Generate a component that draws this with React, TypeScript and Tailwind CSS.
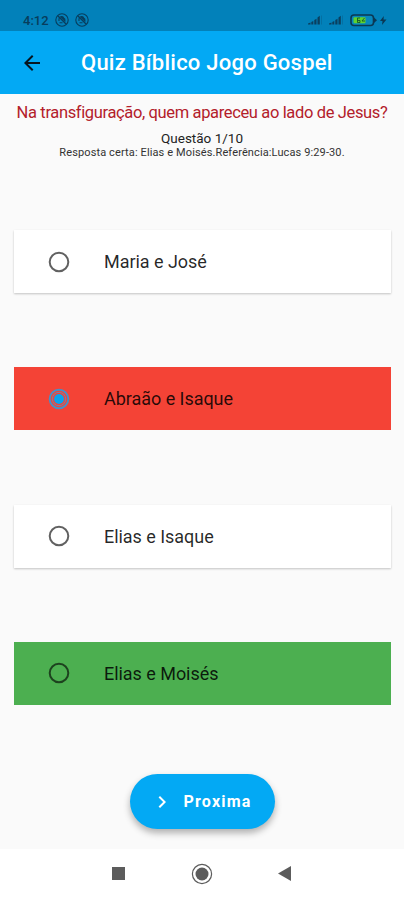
import React, { useState } from 'react'
import { MdArrowBack, MdChevronRight } from 'react-icons/md'

const answers = ["Maria e José", "Abraão e Isaque", "Elias e Isaque", "Elias e Moisés"]
const correct = 3

function MuteIcon() {
    return (
        <svg width="14" height="14" viewBox="0 0 14 14" fill="none" stroke="#083d5c">
            <circle cx="7" cy="7" r="6.2" strokeWidth="1.1" />
            <path d="M4.500 9.800h3M4 8V6c0-2.500 3-3 4.500-1.500" strokeWidth="1.1" />
            <path d="M6 4.500c3-1 4.500 1 4 4z" fill="#083d5c" strokeWidth="0.800" />
            <path d="M3 3l8 8" strokeWidth="1.2" />
        </svg>
    )
}

function Signal() {
    return (
        <svg width="15" height="10" viewBox="0 0 15 10" fill="#0b3f5e">
            <path d="M0 9.500V8.500l2.500-1v2zM3.300 9.500V7l2-1v3.500zM6.300 9.500V5l2.200-1.200v5.700zM9.500 9.500V2.500l2.300-1.800v8.800z" />
            <path d="M13 0.500h1v9h-1z" opacity="0.250" />
        </svg>
    )
}

function Battery() {
    return (
        <svg width="38" height="13" viewBox="0 0 38 13">
            <rect x="1" y="1" width="22.500" height="10.500" rx="3" fill="#0787bd" stroke="#0b3854" strokeWidth="1.600" />
            <path d="M24 3.500l3 2.800-3 2.800z" fill="#0b3854" />
            <rect x="3.500" y="3.300" width="12" height="6" rx="1" fill="#5fd22c" />
            <path d="M10 4H7.500v4.500H10V6.500H7.500M14.500 4L12 7h3" stroke="#14562f" fill="none" strokeWidth="0.900" />
            <path d="M33.800 2L30 7h2.500L32 11l4.500-5.500h-3z" fill="#0b3854" />
        </svg>
    )
}

function StatusBar() {
    return (
        <div className="flex h-[31px] shrink-0 items-center bg-[#0281ba] pt-[9px] pl-[23px] pr-[16px]">
            <span className="w-[32px] text-[13px] leading-none font-medium text-[#083d5c]">4:12</span>
            <div className="flex gap-[6px]">
                <MuteIcon />
                <MuteIcon />
            </div>
            <div className="ml-auto flex items-center">
                <Signal />
                <div className="ml-[6px] mr-[6px]">
                    <Signal />
                </div>
                <Battery />
            </div>
        </div>
    )
}

function Radio({ checked }: any) {
    return (
        <svg width="22" height="22" viewBox="0 0 22 22" fill="none">
            <circle cx="11" cy="11" r="9.300" stroke={checked ? "#4c8ec4" : "#000"} strokeOpacity={checked ? 1 : 0.620} strokeWidth="2" />
            {checked ? (
                <>
                    <circle cx="11" cy="11" r="6.700" stroke="#6f86b0" strokeWidth="1" />
                    <circle cx="11" cy="11" r="5" fill="#08a3ef" />
                </>
            ) : null}
        </svg>
    )
}

function Answer({ label, checked, color, onClick }: any) {
    return (
        <button
            onClick={onClick}
            className={`flex h-[63px] w-full items-center pl-[34px] text-left ${color}`}
        >
            <Radio checked={checked} />
            <span className="ml-[34px] text-[18px] tracking-[-0.040px] text-black/85">{label}</span>
        </button>
    )
}

function App() {
    let [selected, setSelected] = useState(1)

    const getColor = (i: number) => {
        if (i === correct) return "bg-[#4caf50]"
        if (i === selected) return "bg-[#f44336]"
        return "bg-white shadow-[0_1px_2px_rgba(0,0,0,0.220)]"
    }

    return (
        <div className="flex h-[900px] w-[404px] flex-col overflow-hidden bg-[#fafafa] font-[Roboto,sans-serif]">
            <StatusBar />
            <header className="flex h-[63px] shrink-0 items-center bg-[#03a9f4] pl-5">
                <MdArrowBack className="h-6 w-6 text-[#06151f]" />
                <h1 className="ml-[37px] text-[22px] font-medium tracking-[0.240px] whitespace-nowrap text-white">Quiz Bíblico Jogo Gospel</h1>
            </header>

            <div className="flex h-[136px] shrink-0 flex-col items-center whitespace-nowrap">
                <h2 className="mt-[8px] text-[16.500px] leading-[22px] tracking-[-0.360px] text-[#b3202a]">Na transfiguração, quem apareceu ao lado de Jesus?</h2>
                <p className="mt-[6px] text-[13.500px] leading-4 text-[#222]">Questão 1/10</p>
                <p className="text-[11px] leading-[13px] tracking-[0.120px] text-[#333]">Resposta certa: Elias e Moisés.Referência:Lucas 9:29-30.</p>
            </div>

            <main className="flex h-[475px] shrink-0 flex-col justify-between pl-[14px] pr-[13px]">
                {answers.map((e, i) => (
                    <Answer key={e} label={e} checked={i === selected} color={getColor(i)} onClick={() => setSelected(i)} />
                ))}
            </main>

            <div className="flex flex-1 items-start justify-center pt-[69px]">
                <button className="flex h-[55px] w-[145px] items-center rounded-full bg-[#03a9f4] pl-[20px] text-white shadow-[0_4px_7px_rgba(0,0,0,0.300)]">
                    <MdChevronRight className="h-6 w-6" />
                    <span className="ml-[10px] text-[16px] font-bold tracking-[1.200px]">Proxima</span>
                </button>
            </div>

            <nav className="flex h-[51px] shrink-0 items-center justify-between bg-white pb-[2px] pl-[112px] pr-[113px]">
                <svg width="13" height="13"><rect width="13" height="13" fill="#5c5c5c" /></svg>
                <svg width="22" height="22" viewBox="0 0 22 22">
                    <circle cx="11" cy="11" r="9.600" fill="none" stroke="#5c5c5c" strokeWidth="1.200" />
                    <circle cx="11" cy="11" r="6.500" fill="#5c5c5c" />
                </svg>
                <svg width="13" height="15"><path d="M13 0v15L0 7.500z" fill="#5c5c5c" /></svg>
            </nav>
        </div>
    )
}

export default App
